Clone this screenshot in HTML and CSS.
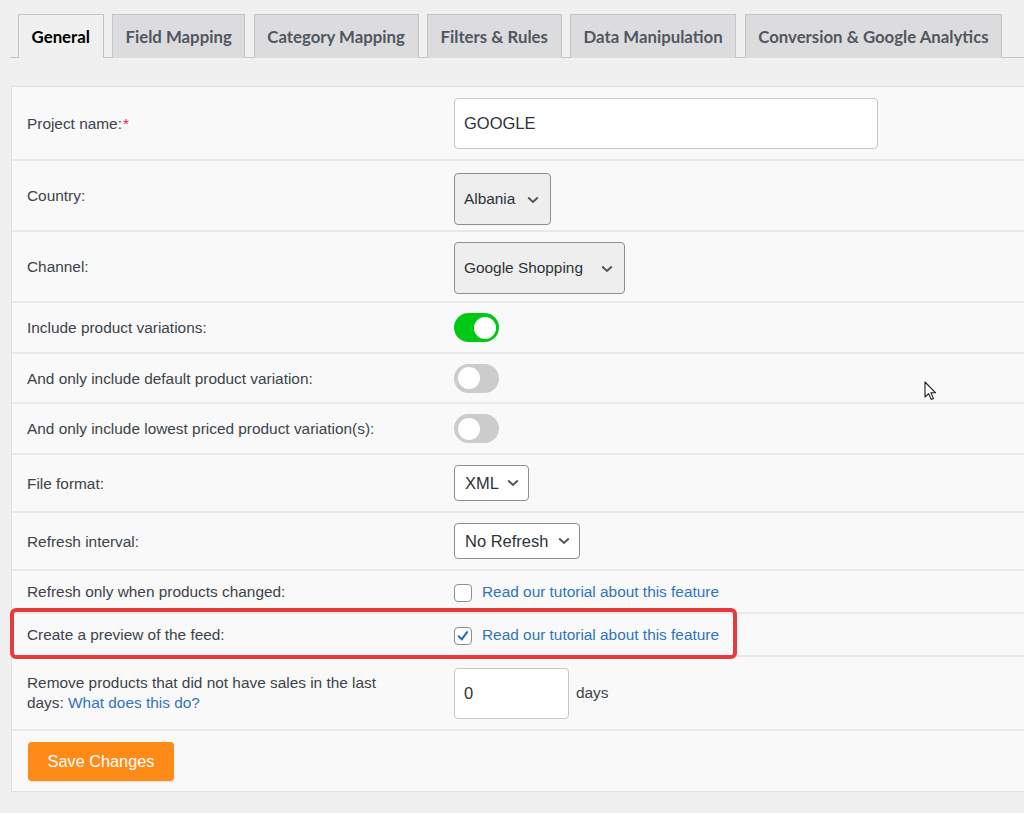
FILE: index.html
```html
<!DOCTYPE html>
<html>
<head>
<meta charset="utf-8">
<title>Feed settings</title>
<link rel="stylesheet" href="styles.css">
</head>
<body>
<nav class="tabs">
  <a class="tab active">General</a>
  <a class="tab">Field Mapping</a>
  <a class="tab">Category Mapping</a>
  <a class="tab">Filters &amp; Rules</a>
  <a class="tab">Data Manipulation</a>
  <a class="tab">Conversion &amp; Google Analytics</a>
</nav>

<section class="panel">
  <div class="row r1">
    <div class="label">Project name:<span class="req">*</span></div>
    <div class="ctl"><div class="text-input name">GOOGLE</div></div>
  </div>
  <div class="row r2">
    <div class="label">Country:</div>
    <div class="ctl"><div class="select tall country-sel"><span>Albania</span><svg class="chev" viewBox="0 0 12 8" width="12" height="8"><path d="M1.2 1.5 L6 6 L10.8 1.5" fill="none" stroke="#50575e" stroke-width="2"/></svg></div></div>
  </div>
  <div class="row r3">
    <div class="label">Channel:</div>
    <div class="ctl"><div class="select tall channel-sel"><span>Google Shopping</span><svg class="chev" viewBox="0 0 12 8" width="12" height="8"><path d="M1.2 1.5 L6 6 L10.8 1.5" fill="none" stroke="#50575e" stroke-width="2"/></svg></div></div>
  </div>
  <div class="row r4">
    <div class="label">Include product variations:</div>
    <div class="ctl"><div class="toggle on"><span class="knob"></span></div></div>
  </div>
  <div class="row r5">
    <div class="label">And only include default product variation:</div>
    <div class="ctl"><div class="toggle"><span class="knob"></span></div></div>
  </div>
  <div class="row r6">
    <div class="label">And only include lowest priced product variation(s):</div>
    <div class="ctl"><div class="toggle"><span class="knob"></span></div></div>
  </div>
  <div class="row r7">
    <div class="label">File format:</div>
    <div class="ctl"><div class="select small xml-sel"><span>XML</span><svg class="chev" viewBox="0 0 12 8" width="12" height="8"><path d="M1.2 1.5 L6 6 L10.8 1.5" fill="none" stroke="#50575e" stroke-width="2"/></svg></div></div>
  </div>
  <div class="row r8">
    <div class="label">Refresh interval:</div>
    <div class="ctl"><div class="select small refresh-sel"><span>No Refresh</span><svg class="chev" viewBox="0 0 12 8" width="12" height="8"><path d="M1.2 1.5 L6 6 L10.8 1.5" fill="none" stroke="#50575e" stroke-width="2"/></svg></div></div>
  </div>
  <div class="row r9">
    <div class="label">Refresh only when products changed:</div>
    <div class="ctl check-line"><span class="checkbox"></span><a class="link">Read our tutorial about this feature</a></div>
  </div>
  <div class="row r10">
    <div class="label">Create a preview of the feed:</div>
    <div class="ctl check-line"><span class="checkbox checked"><svg viewBox="0 0 18 18" width="18" height="18"><path d="M4.2 9.3 L7.6 12.8 L13.6 4.6" fill="none" stroke="#2271b1" stroke-width="2.4" stroke-linecap="round" stroke-linejoin="round"/></svg></span><a class="link">Read our tutorial about this feature</a></div>
  </div>
  <div class="row r11">
    <div class="label two-line"><span class="line">Remove products that did not have sales in the last</span><span class="line">days: <a class="link">What does this do?</a></span></div>
    <div class="ctl days-line"><div class="text-input days-input">0</div><span class="unit">days</span></div>
  </div>
  <div class="row r12">
    <button class="save">Save Changes</button>
  </div>
</section>

<svg class="cursor" viewBox="0 0 13 20" width="13" height="20"><path d="M1 1 L1 16 L4.6 12.6 L7.2 18.4 L9.4 17.4 L6.9 11.8 L11.6 11.8 Z" fill="#ffffff" stroke="#1d1d1f" stroke-width="1.1" stroke-linejoin="round"/></svg>
</body>
</html>
```

FILE: styles.css
```css
html, body {
  margin: 0;
  padding: 0;
}
body {
  background: #f0f0f1;
  font-family: "Liberation Sans", Arial, sans-serif;
  color: #3c434a;
  width: 1024px;
  height: 813px;
  overflow: hidden;
  position: relative;
}

/* tabs */
.tabs {
  display: flex;
  gap: 8.4px;
  margin: 14px 0 0 10px;
  padding-left: 8px;
  border-bottom: 1px solid #c3c4c7;
  height: 43px;
  box-sizing: content-box;
}
.tab {
  display: flex;
  align-items: center;
  box-sizing: border-box;
  height: 44px;
  padding: 0 12.6px 1px;
  border: 1px solid #c3c4c7;
  border-bottom: none;
  background: #dcdcde;
  color: #50575e;
  font-family: Lato, "Liberation Sans", sans-serif;
  font-weight: 700;
  font-size: 16.8px;
  white-space: nowrap;
  cursor: pointer;
}
.tab.active {
  background: #f0f0f1;
  color: #000;
}

/* panel */
.panel {
  margin: 28px 0 0 11px;
  width: 1040px;
  background: #f9f9f9;
  border: 1px solid #e1e1e1;
  border-right: none;
  box-sizing: border-box;
}
.row {
  display: grid;
  grid-template-columns: 442px 1fr;
  align-items: center;
  border-bottom: 2px solid #e9e9e9;
  box-sizing: border-box;
  position: relative;
}
.r1 { height: 74px; }
.r2 { height: 71px; }
.r3 { height: 71px; }
.r4 { height: 51px; }
.r5 { height: 50px; }
.r6 { height: 51px; }
.r7 { height: 58px; }
.r8 { height: 58px; }
.r9 { height: 43px; }
.r10 { height: 43px; }
.r11 { height: 74px; }
.r12 {
  height: 60px;
  border-bottom: none;
  display: flex;
  align-items: flex-start;
  padding: 11px 0 0 16px;
}

.label {
  padding-left: 15px;
  font-size: 15.4px;
  line-height: 19px;
  color: #3c434a;
}
.label.two-line {
  display: flex;
  flex-direction: column;
  gap: 1.5px;
  line-height: 18px;
}
.label .line {
  display: block;
}
.req {
  color: #e8273c;
  margin-left: 1px;
}
.ctl {
  display: flex;
  align-items: center;
}

.text-input {
  box-sizing: border-box;
  background: #fff;
  border: 1px solid #c7c7c7;
  border-radius: 4px;
  height: 51px;
  display: flex;
  align-items: center;
  padding-left: 9px;
  font-size: 16.5px;
  color: #2c3338;
}
.text-input.name {
  width: 424px;
}
.text-input.days-input {
  width: 115px;
}
.days-line {
  gap: 7px;
}
.unit {
  font-size: 15.4px;
  color: #3c434a;
}

.select {
  box-sizing: border-box;
  border: 1px solid #8c8f94;
  border-radius: 4px;
  display: flex;
  align-items: center;
  color: #2c3338;
  justify-content: space-between;
}
.select.tall {
  height: 52px;
  background: #eeeeee;
  font-size: 15.4px;
  padding: 0 11px 0 9px;
}
.country-sel { width: 97px; margin-top: 6px; }
.country-sel .chev { margin-top: 2px; }
.channel-sel { width: 171px; margin-top: 3px; }
.channel-sel .chev { margin-top: 2px; }
.select.small {
  height: 36px;
  background: #fff;
  font-size: 16.5px;
  padding: 0 9px 0 10px;
}
.xml-sel { width: 75px; }
.refresh-sel { width: 126px; }

.toggle {
  width: 45px;
  height: 29px;
  border-radius: 15px;
  background: #cccccc;
  position: relative;
  box-sizing: border-box;
}
.toggle .knob {
  position: absolute;
  top: 3.5px;
  left: 4px;
  width: 22px;
  height: 22px;
  border-radius: 50%;
  background: #fff;
}
.toggle.on {
  background: #00c916;
}
.toggle.on .knob {
  left: 20px;
}

.check-line {
  gap: 10px;
}
.checkbox {
  box-sizing: border-box;
  width: 18px;
  height: 18px;
  border: 1px solid #8c8f94;
  border-radius: 4px;
  background: #fff;
  display: flex;
  align-items: center;
  justify-content: center;
  position: relative;
  top: 1px;
}
.checkbox svg {
  display: block;
}
.link {
  color: #2f74bd;
  font-size: 15.4px;
  text-decoration: none;
  cursor: pointer;
}

.r10::after {
  content: "";
  position: absolute;
  left: -2px;
  top: -6px;
  width: 727px;
  height: 51px;
  box-sizing: border-box;
  border: 4px solid #e8393d;
  border-radius: 6px;
  pointer-events: none;
}

.save {
  width: 146px;
  height: 39px;
  background: #fe8a17;
  border: none;
  border-radius: 4px;
  color: #fff;
  font-family: "Liberation Sans", Arial, sans-serif;
  font-size: 16.3px;
  box-shadow: 0 1px 2px rgba(0,0,0,0.12);
  cursor: pointer;
}

.cursor {
  position: absolute;
  left: 924px;
  top: 381px;
}
```
